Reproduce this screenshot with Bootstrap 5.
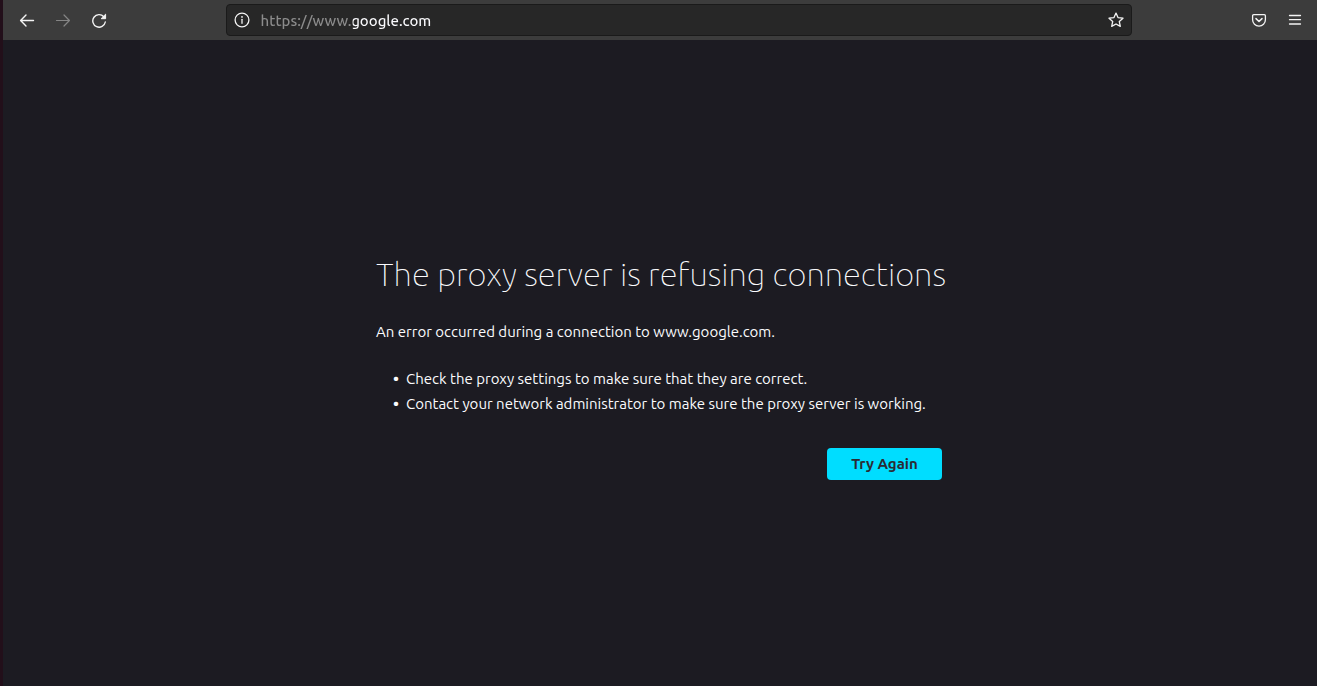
<!DOCTYPE html>
<html lang="en">
<head>
<meta charset="utf-8">
<meta name="viewport" content="width=device-width, initial-scale=1">
<title>Problem loading page</title>
<link href="https://cdn.jsdelivr.net/npm/bootstrap@5.3.0/dist/css/bootstrap.min.css" rel="stylesheet">
<style>
body { background: #1c1b22; color: #fbfbfe; font-family: Ubuntu, "Noto Sans", "Open Sans", sans-serif; font-size: 15px; font-weight: 450; line-height: 25px; border-left: 3px solid #220f1a; }
.toolbar { height: 40px; background: #3c3c3c; padding: 0 4px 0 6px; }
.tool { width: 36px; height: 36px; padding: 0; border: 0; color: #f4f4f4; display: flex; align-items: center; justify-content: center; }
.tool:disabled { color: #858585; border: 0; opacity: 1; }
.tool:hover { color: #fff; background: #505050; }
.spring { flex: 3 1 0; }
.urlbar { flex: 25 1 0; height: 32px; background: #272727; border: 1px solid #1a1a1a; border-radius: 4px; }
.urlbar .tool { width: 30px; height: 30px; }
.address { flex: 1 1 0; min-width: 0; height: 30px; padding: 0 0 0 4px; border: 0; outline: 0; color: #fbfbfe; -webkit-text-fill-color: transparent; background: linear-gradient(90deg, #8c8c8c 96px, #fbfbfe 96px); -webkit-background-clip: text; background-clip: text; font-size: 15px; font-weight: 500; }
main { padding: 8px 2px 0 0; }
.error-box { width: 566px; max-width: 100%; }
.error-title { font-family: Ubuntu, Lato, sans-serif; font-weight: 100; font-size: 33px; line-height: 40px; margin-bottom: 25px; white-space: nowrap; }
.error-box p { margin-bottom: 22px; }
.error-box ul { margin-bottom: 32px; padding-left: 30px; }
.error-box li::marker { content: "•\00a0\00a0"; font-weight: 800; }
.retry { background: #00ddff; color: #2b2a33; border: 0; border-radius: 4px; min-width: 115px; height: 32px; padding: 0 20px; font-size: 15px; font-weight: 700; line-height: 32px; }
.retry:hover { background: #80ebff; color: #2b2a33; }
@media (max-width: 600px) { .error-title { white-space: normal; } }
</style>
</head>
<body class="min-vh-100 d-flex flex-column">
<nav class="toolbar d-flex align-items-center" aria-label="Browser toolbar">
  <button type="button" class="btn tool" aria-label="Back"><svg width="16" height="16" viewBox="0 0 16 16" fill="none" stroke="currentColor" stroke-width="1.4" stroke-linecap="round" stroke-linejoin="round"><path d="M14.5 8.5H1.7M7 3 1.6 8.5 7 14"/></svg></button>
  <button type="button" class="btn tool" aria-label="Forward" disabled><svg width="16" height="16" viewBox="0 0 16 16" fill="none" stroke="currentColor" stroke-width="1.2" stroke-linecap="round" stroke-linejoin="round"><path d="M1.5 8.5h12.8M9 3l5.4 5.5L9 14"/></svg></button>
  <button type="button" class="btn tool" aria-label="Reload"><svg width="16" height="16" viewBox="0 0 16 16" fill="none" stroke="currentColor" stroke-width="1.4" stroke-linecap="round"><path d="M12.8 4.7A6.3 6.3 0 1 0 14.3 10"/><path d="M14.6 2.6v4.1H10.5z" fill="currentColor" stroke-width="1" stroke-linejoin="round"/></svg></button>
  <div class="spring"></div>
  <div class="urlbar d-flex align-items-center">
    <button type="button" class="btn tool" aria-label="Site information"><svg width="16" height="16" viewBox="0 0 16 16" fill="none" stroke="currentColor" stroke-width="1.3" stroke-linecap="round"><circle cx="8" cy="8" r="6.9"/><path d="M8 7.3v4"/><circle cx="8" cy="4.9" r=".9" fill="currentColor" stroke="none"/></svg></button>
    <input class="address" type="text" value="https://www.google.com" aria-label="Address" spellcheck="false">
    <button type="button" class="btn tool" aria-label="Bookmark this page"><svg width="16" height="16" viewBox="0 0 16 16" fill="none" stroke="currentColor" stroke-width="1.3" stroke-linejoin="round"><path d="M8 1.1 10 5.6l5 .6-3.7 3.3 1 4.9L8 12l-4.3 2.4 1-4.9L1 6.2l5-.6z"/></svg></button>
  </div>
  <div class="spring"></div>
  <button type="button" class="btn tool" aria-label="Save to Pocket"><svg width="16" height="16" viewBox="0 0 16 16" fill="none" stroke="currentColor" stroke-width="1.3" stroke-linecap="round" stroke-linejoin="round"><path d="M2.7 2.6h10.6c.7 0 1.1.4 1.1 1.1v4a6.4 6.4 0 0 1-12.8 0v-4c0-.7.4-1.1 1.1-1.1z"/><path d="M5 6.6 8 9.5l3-2.9" stroke-width="1.5"/></svg></button>
  <button type="button" class="btn tool" aria-label="Open application menu"><svg width="16" height="16" viewBox="0 0 16 16" fill="none" stroke="currentColor" stroke-width="1.3" stroke-linecap="round"><path d="M2.5 3.5h11M2.5 7.7h11M2.5 12h11"/></svg></button>
</nav>
<main class="flex-grow-1 d-flex align-items-center justify-content-center">
  <div class="error-box">
    <h1 class="error-title">The proxy server is refusing connections</h1>
    <p>An error occurred during a connection to www.google.com.</p>
    <ul>
      <li>Check the proxy settings to make sure that they are correct.</li>
      <li>Contact your network administrator to make sure the proxy server is working.</li>
    </ul>
    <div class="d-flex justify-content-end"><button type="button" class="btn retry">Try Again</button></div>
  </div>
</main>
<script src="https://cdn.jsdelivr.net/npm/bootstrap@5.3.0/dist/js/bootstrap.bundle.min.js"></script>
</body>
</html>
